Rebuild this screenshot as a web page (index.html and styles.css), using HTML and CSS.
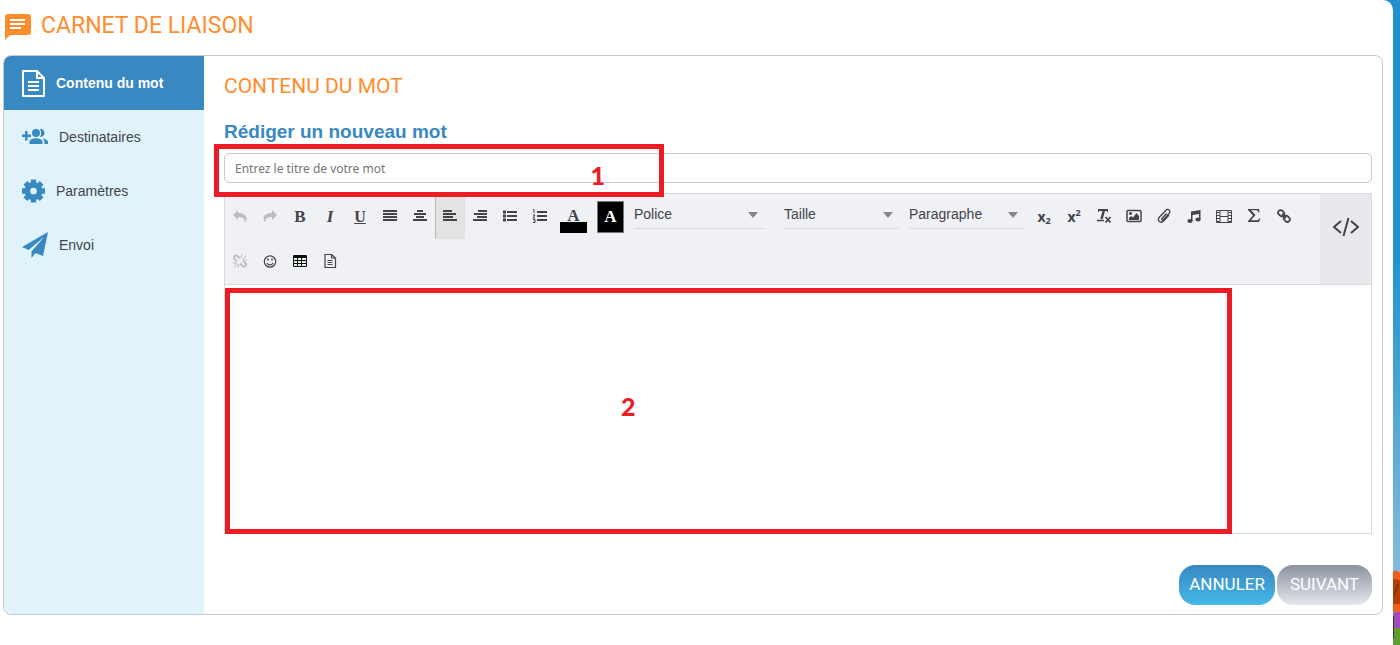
FILE: index.html
```html
<!DOCTYPE html>
<html lang="fr">
<head>
  <meta charset="UTF-8">
  <title>Carnet de liaison</title>
  <link rel="stylesheet" href="styles.css">
</head>
<body>

<div class="layout">
  <main class="page">
    <header class="page-header">
      <svg class="page-icon" width="26" height="26" viewBox="0 0 26 26"><path fill="#ff8d2e" d="M3 0h20q3 0 3 3v15q0 3-3 3H5l-5 5V3q0-3 3-3z"/><path fill="none" stroke="#fff" stroke-width="2" d="M5 6h15M5 10h15M5 14h11"/></svg>
      <h1>CARNET DE LIAISON</h1>
    </header>

    <div class="panel">
      <!-- Steps -->
      <nav class="steps">
        <a class="step active" href="#contenu">
          <svg width="23" height="27" viewBox="0 0 23 27" fill="none" stroke="#fff" stroke-width="2"><path d="M1 1h14l7 7v18H1z" stroke-linejoin="round"/><path d="M15 1v7h7M6 12h11M6 16h11M6 20h11"/></svg>
          Contenu du mot
        </a>
        <a class="step" href="#destinataires">
          <svg width="26" height="18" viewBox="0 0 26 18" fill="#3888c1"><path d="M3 3h2.500v3.500H9V9H5.500v3.500H3V9H0V6.500h3z"/><circle cx="14" cy="5" r="4"/><path d="M7.500 16v-2.200C7.500 11.500 11 10.300 14 10.300s6.500 1.200 6.500 3.500V16z"/><path d="M18 1.200c2.500-.6 4.500 1.400 4.500 3.800S20.500 9.400 18 8.800c1.500-2 1.500-5.500 0-7.600zM20.500 10.600c3 .4 5.500 1.600 5.500 3.400v2h-3.600v-2c0-1.400-.7-2.600-1.900-3.400z"/></svg>
          Destinataires
        </a>
        <a class="step" href="#parametres">
          <svg width="23" height="24" viewBox="0 0 24 24"><circle cx="12" cy="12" r="6.500" fill="none" stroke="#3888c1" stroke-width="6"/><g stroke="#3888c1" stroke-width="5.500"><path d="M12 0v4M12 20v4M0 12h4M20 12h4M3.500 3.500l3 3M17.500 17.500l3 3M3.500 20.500l3-3M17.500 6.500l3-3"/></g></svg>
          Paramètres
        </a>
        <a class="step" href="#envoi">
          <svg width="26" height="26" viewBox="0 0 26 26" fill="#3888c1"><path d="M26 0L0 15l6.500 3L22 5 9.500 19.500V26l4-5 7.500 3z"/></svg>
          Envoi
        </a>
      </nav>

      <section class="content">
        <h2>CONTENU DU MOT</h2>
        <h3><label for="titre">Rédiger un nouveau mot</label></h3>

        <div class="title-row">
          <input class="title-input" id="titre" type="text" placeholder="Entrez le titre de votre mot">
          <div class="mark mark-title"><span>1</span></div>
        </div>

        <div class="editor">
          <div class="toolbar">
            <div class="tools">
              <button class="tool disabled" type="button" aria-label="Annuler la saisie"><svg width="16" height="16" viewBox="0 0 16 16"><path fill="currentColor" d="M6 2v3c5 0 8.500 2 8.500 5.500 0 1.500-.7 3-1.700 4C13 11 11 9 6 9v3L1 7z"/></svg></button>
              <button class="tool disabled" type="button" aria-label="Rétablir"><svg width="16" height="16" viewBox="0 0 16 16"><path fill="currentColor" d="M10 2v3c-5 0-8.500 2-8.500 5.500 0 1.500.7 3 1.700 4C3 11 5 9 10 9v3l5-5z"/></svg></button>
              <button class="tool letter" type="button" aria-label="Gras">B</button>
              <button class="tool letter italic" type="button" aria-label="Italique">I</button>
              <button class="tool letter underline" type="button" aria-label="Souligné">U</button>
              <button class="tool" type="button" aria-label="Justifier"><svg width="16" height="16" viewBox="0 0 16 16"><path stroke="currentColor" stroke-width="2" d="M1 3h14M1 6h14M1 9h14M1 12h14"/></svg></button>
              <button class="tool" type="button" aria-label="Centrer"><svg width="16" height="16" viewBox="0 0 16 16"><path stroke="currentColor" stroke-width="2" d="M5 3h6M2 6h12M4 9h8M1 12h14"/></svg></button>
              <button class="tool pressed" type="button" aria-label="Aligner à gauche"><svg width="16" height="16" viewBox="0 0 16 16"><path stroke="currentColor" stroke-width="2" d="M1 3h9M1 6h13M1 9h10M1 12h14"/></svg></button>
              <button class="tool" type="button" aria-label="Aligner à droite"><svg width="16" height="16" viewBox="0 0 16 16"><path stroke="currentColor" stroke-width="2" d="M6 3h9M2 6h13M5 9h10M1 12h14"/></svg></button>
              <button class="tool" type="button" aria-label="Liste à puces"><svg width="16" height="16" viewBox="0 0 16 16"><path stroke="currentColor" stroke-width="2" d="M5 4h10M5 8h10M5 12h10"/><path stroke="currentColor" stroke-width="3" d="M1 4h3M1 8h3M1 12h3"/></svg></button>
              <button class="tool" type="button" aria-label="Liste numérotée"><svg width="16" height="16" viewBox="0 0 16 16"><path stroke="currentColor" stroke-width="2" d="M5 4h10M5 8h10M5 12h10"/><path fill="none" stroke="currentColor" d="M1 1.500h1V5M1 7h2l-2 3h2M1 11.500h2v3H1M2 13h1"/></svg></button>
              <button class="swatch-tool" type="button" aria-label="Couleur du texte"><span class="swatch text-swatch">A</span></button>
              <button class="swatch-tool" type="button" aria-label="Couleur de fond"><span class="swatch back-swatch">A</span></button>
              <div class="picker picker-font"><select aria-label="Police"><option>Police</option></select></div>
              <div class="picker"><select aria-label="Taille"><option>Taille</option></select></div>
              <div class="picker"><select aria-label="Format"><option>Paragraphe</option></select></div>
              <button class="tool script" type="button" aria-label="Indice"><span>x<sub>2</sub></span></button>
              <button class="tool script" type="button" aria-label="Exposant"><span>x<sup>2</sup></span></button>
              <button class="tool" type="button" aria-label="Effacer la mise en forme"><svg width="16" height="16" viewBox="0 0 16 16" fill="none" stroke="currentColor"><path stroke-width="2" d="M2 2h10"/><path stroke-width="2.500" d="M8 2L5.500 11"/><path d="M2.500 1v3M11.500 1v3"/><path stroke-width="1.500" d="M1 12.500h7"/><path stroke-width="1.800" d="M9.500 9l5 5.500M14.500 9l-5 5.500"/></svg></button>
              <button class="tool" type="button" aria-label="Image"><svg width="16" height="16" viewBox="0 0 16 16"><rect x="1" y="2.500" width="14" height="11" rx="1" fill="none" stroke="currentColor" stroke-width="1.500"/><circle cx="4.500" cy="5.500" r="1.500" fill="currentColor"/><path fill="currentColor" d="M3 12v-2l2-2 2 1.500L10.500 5 13 8v4z"/></svg></button>
              <button class="tool" type="button" aria-label="Pièce jointe"><svg width="16" height="16" viewBox="0 0 16 16"><path fill="none" stroke="currentColor" stroke-width="1.300" d="M10.500 5.500L6 10.500c-1 1.200.5 2.400 1.500 1.300l5.500-6.300c2.300-2.700-1-5.500-3.300-3L3.500 9c-3 3.500 1.300 7.200 4.300 3.800L13 7"/></svg></button>
              <button class="tool" type="button" aria-label="Son"><svg width="16" height="16" viewBox="0 0 16 16" fill="currentColor"><path d="M5 3.500L14.500 2v9.500H13V6L6.500 7v6H5z"/><ellipse cx="4" cy="13" rx="2.600" ry="2"/><ellipse cx="12" cy="11.500" rx="2.600" ry="2"/></svg></button>
              <button class="tool" type="button" aria-label="Vidéo"><svg width="16" height="16" viewBox="0 0 16 16" fill="none" stroke="currentColor"><path d="M.5 2.500h15v12H.5zM4 2.500v12M12 2.500v12M4 8.500h8"/><path stroke-width="3" stroke-dasharray="1 2" d="M2.200 4v10M13.800 4v10"/></svg></button>
              <button class="tool" type="button" aria-label="Formule"><svg width="16" height="16" viewBox="0 0 16 16"><path fill="currentColor" d="M2 1h11l.5 3.500h-1C12 3 11.500 2.200 10 2.200H5L9.500 7 5 12.200h5.500c1.500 0 2-.5 2.700-2h1L13 14H2v-1l5-5.500L2 2z"/></svg></button>
              <button class="tool" type="button" aria-label="Lien"><svg width="16" height="16" viewBox="0 0 16 16" fill="none" stroke="currentColor" stroke-width="1.800"><rect x="2" y="2.500" width="6.500" height="5" rx="2.500" transform="rotate(45 5 5)"/><rect x="7.500" y="8.500" width="6.500" height="5" rx="2.500" transform="rotate(45 11 11)"/><path d="M6 6l4 4"/></svg></button>
              <button class="tool disabled" type="button" aria-label="Supprimer le lien"><svg width="16" height="16" viewBox="0 0 16 16" fill="none" stroke="currentColor"><path stroke-width="1.800" d="M8 5.500L5.500 3C3.500 1.500.8 4.300 2.500 6L5 8.500M8 10.500l2.500 2.500c2 1.700 4.800-1 3-3L11 7.500"/><path d="M10 1L9 5M14 3l-3.500 3M15 7h-4M6 15l.5-4M2 14l3-3.500M1 10h4"/></svg></button>
              <button class="tool" type="button" aria-label="Émoticône"><svg width="16" height="16" viewBox="0 0 16 16" fill="none" stroke="currentColor" stroke-width="1.200"><circle cx="8" cy="8.500" r="5.700"/><path d="M5 10c1 2.500 5 2.500 6 0"/><path stroke-width="1.500" d="M6 5.500v2M10 5.500v2"/></svg></button>
              <button class="tool" type="button" aria-label="Tableau"><svg width="16" height="16" viewBox="0 0 16 16"><path fill="#111" d="M2 2h12q1 0 1 1v10q0 1-1 1H2q-1 0-1-1V3q0-1 1-1z"/><path fill="#e9f5e9" d="M2 5h3v2H2zM6 5h3v2H6zM10 5h4v2h-4zM2 8h3v2H2zM6 8h3v2H6zM10 8h4v2h-4zM2 11h3v2H2zM6 11h3v2H6zM10 11h4v2h-4z"/></svg></button>
              <button class="tool" type="button" aria-label="Modèle"><svg width="16" height="16" viewBox="0 0 16 16" fill="none" stroke="currentColor" stroke-width="1.200"><path d="M3 1.500h6.500L13.500 5v9.500H3zM9.500 1.500V5h4"/><path d="M5.500 7.500h5M5.500 9.500h5M5.500 11.500h5"/></svg></button>
            </div>
            <button class="source" type="button" aria-label="Code source"><svg width="26" height="20" viewBox="0 0 26 20" fill="none" stroke="currentColor" stroke-width="2"><path d="M8 4l-7 6 7 6M18 4l7 6-7 6M15.500 1l-5 18"/></svg></button>
          </div>
          <div class="writing">
            <textarea class="writing-area" aria-label="Texte du mot"></textarea>
            <div class="mark mark-body"><span>2</span></div>
          </div>
        </div>

        <div class="actions">
          <button class="action cancel" type="button">ANNULER</button>
          <button class="action next" type="button">SUIVANT</button>
        </div>
      </section>
    </div>
  </main>

  <div class="scenery">
    <svg width="7" height="75" viewBox="0 0 7 75"><path fill="#f35b17" d="M0 1q5-1 7 2v39q-3-1-7 0z"/><path fill="#b53e07" d="M0 9l7 1v24H0z"/><path stroke="#5b2a10" d="M5 14L1 25"/><path fill="#a24ab8" d="M0 43q4-2 7-1v17H0z"/><path fill="#5c9e30" d="M0 58h7v17H0z"/><path fill="#333" d="M0 46h1v22H0z"/></svg>
  </div>
</div>

</body>
</html>
```
FILE: styles.css
```css
* {
  box-sizing: border-box;
}

body {
  margin: 0;
  background: linear-gradient(#238fcc, #2492ce 40%, #86bcdc 90%);
  font-family: "Liberation Sans", Arial, sans-serif;
  font-size: 14px;
  color: #42434b;
}

h1, h2, h3 {
  margin: 0;
}

button, input, select, textarea {
  font: inherit;
  color: inherit;
}

.layout {
  display: flex;
  min-height: 100vh;
}

/* White sheet */
.page {
  flex: 1;
  padding: 0 10px 30px 3px;
  background: #fff;
  border-top-right-radius: 10px;
}

.scenery {
  display: flex;
  align-items: flex-end;
  width: 7px;
}

.page-header {
  display: flex;
  align-items: center;
  gap: 10px;
  height: 55px;
  padding: 0 2px 4px;
}

.page-icon {
  margin-top: 2px;
}

h1, h2, .action {
  font-family: Roboto, sans-serif;
  font-weight: 400;
}

h1, h2 {
  font-size: 23px;
  line-height: 30px;
  color: #ff8d2e;
}

h2 {
  font-size: 21px;
}

.panel {
  display: flex;
  border: 1px solid #c5cad0;
  border-radius: 8px;
  overflow: hidden;
}

/* Steps on the left */
.steps {
  width: 200px;
  background: #e0f3fb;
}

.step {
  display: flex;
  align-items: center;
  gap: 11px;
  height: 54px;
  padding-left: 18px;
  color: #42434b;
  text-decoration: none;
}

.step.active {
  background: #3888c1;
  color: #fff;
  font-weight: bold;
}

.content {
  flex: 1;
  min-width: 0;
  padding: 15px 10px 9px 20px;
}

h3 {
  margin-top: 20px;
  font-size: 19px;
  line-height: 22px;
  color: #3888c1;
}

.title-row {
  position: relative;
  margin: 10px 0;
}

.title-input {
  display: block;
  width: 100%;
  height: 30px;
  padding: 0 10px;
  border: 1px solid #c5cad0;
  border-radius: 5px;
  font-family: "Noto Sans", sans-serif;
  font-size: 12px;
}

.title-input::placeholder {
  color: #757575;
}

/* Red numbered frames over the fields */
.mark {
  position: absolute;
  border: 5px solid #ed1c24;
  color: #ed1c24;
  font-family: Lato, sans-serif;
  font-size: 25px;
  font-weight: 900;
  line-height: 30px;
  pointer-events: none;
}

.mark span {
  position: absolute;
}

.mark-title {
  top: -9px;
  left: -10px;
  z-index: 1;
  width: 450px;
  height: 53px;
}

.mark-title span {
  right: 54px;
  bottom: 2px;
}

.mark-body {
  top: 3px;
  bottom: -1px;
  left: 0;
  width: 1007px;
}

.mark-body span {
  top: 98px;
  left: 391px;
}

/* Editor */
.editor {
  border: 1px solid #d9dadc;
}

.toolbar {
  display: flex;
  background: #f0f1f4;
  border-bottom: 1px solid #d9dadc;
}

.tools {
  display: flex;
  flex: 1;
  flex-wrap: wrap;
}

.tool, .swatch-tool, .source {
  display: flex;
  align-items: center;
  justify-content: center;
  height: 45px;
  padding: 0;
  border: 0;
  background: none;
  color: #42434b;
}

.tool {
  width: 30px;
  padding-bottom: 2px;
}

.tool.disabled {
  color: #bbbdc2;
}

.tool.pressed {
  background: #e3e3e3;
  box-shadow: inset 1px 0 #b8b8b8;
}

.letter {
  padding-bottom: 0;
  font-family: "Liberation Serif", serif;
  font-size: 17px;
  font-weight: bold;
}

.italic {
  font-style: italic;
}

.underline {
  font-size: 16px;
  text-decoration: underline;
}

.script {
  padding-bottom: 0;
  font-family: "Open Sans", sans-serif;
  font-size: 14px;
  font-weight: bold;
}

.script sub, .script sup {
  font-size: 9px;
  line-height: 0;
}

.script sub {
  vertical-align: -2px;
}

.swatch-tool {
  width: 37px;
}

.swatch {
  width: 27px;
  height: 32px;
  font-family: "Liberation Serif", serif;
  font-size: 17px;
  font-weight: bold;
  line-height: 30px;
}

.text-swatch {
  background: linear-gradient(#000, #000) bottom / 100% 11px no-repeat;
}

.back-swatch {
  border: 1px solid #777;
  background: #000;
  color: #fff;
}

.picker {
  position: relative;
  width: 115px;
  height: 34px;
  margin: 1px 5px 0;
  border-bottom: 1px solid #d9dadc;
}

.picker-font {
  width: 130px;
  margin-right: 15px;
}

.picker select {
  width: 100%;
  height: 38px;
  padding: 0;
  border: 0;
  background: none;
  appearance: none;
}

.picker::after {
  content: "";
  position: absolute;
  top: 17px;
  right: 6px;
  border: 5px solid transparent;
  border-top: 6px solid #85868a;
  border-bottom: 0;
  pointer-events: none;
}

.source {
  align-items: flex-start;
  width: 51px;
  height: auto;
  padding-top: 23px;
  background: #e8e9ed;
}

.writing {
  position: relative;
}

.writing-area {
  display: block;
  width: 100%;
  height: 248px;
  border: 0;
  resize: none;
}

/* Bottom buttons */
.actions {
  display: flex;
  justify-content: flex-end;
  gap: 2px;
  margin-top: 31px;
}

.action {
  height: 40px;
  padding: 0 10px 2px;
  border: 0;
  border-radius: 16px;
  color: #fff;
  font-size: 17px;
}

.cancel {
  background: linear-gradient(#3888c1, #45b8e8);
}

.next {
  padding: 0 13px 2px;
  background: linear-gradient(#8c92a1, #e6e7ec);
}
```
